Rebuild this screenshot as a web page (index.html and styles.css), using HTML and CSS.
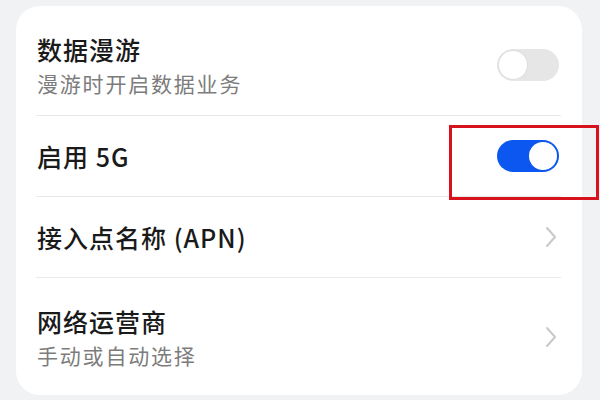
FILE: index.html
```html
<!DOCTYPE html>
<html lang="zh-CN">
<head>
<meta charset="utf-8">
<link rel="stylesheet" href="styles.css">
</head>
<body>
<div class="card">
  <div class="row row-first">
    <div class="texts">
      <div class="title">数据漫游</div>
      <div class="sub">漫游时开启数据业务</div>
    </div>
    <div class="switch"><span class="knob"></span></div>
  </div>
  <div class="row row-single">
    <div class="texts"><div class="title">启用 5G</div></div>
    <div class="switch on"><span class="knob"></span></div>
  </div>
  <div class="row row-single">
    <div class="texts"><div class="title">接入点名称 (APN)</div></div>
    <svg class="chev" width="12" height="22" viewBox="0 0 12 22"><path d="M2 2 L10 11 L2 20" fill="none" stroke="#c8c8c8" stroke-width="2" stroke-linecap="round" stroke-linejoin="round"/></svg>
  </div>
  <div class="row row-last">
    <div class="texts">
      <div class="title">网络运营商</div>
      <div class="sub">手动或自动选择</div>
    </div>
    <svg class="chev" width="12" height="22" viewBox="0 0 12 22"><path d="M2 2 L10 11 L2 20" fill="none" stroke="#c8c8c8" stroke-width="2" stroke-linecap="round" stroke-linejoin="round"/></svg>
  </div>
</div>
<div class="highlight"></div>
</body>
</html>
```
FILE: styles.css
```css
html, body {
  margin: 0;
  padding: 0;
}
body {
  width: 600px;
  height: 400px;
  background: #f1f2f4;
  font-family: "Noto Sans CJK SC", "Noto Sans", sans-serif;
  overflow: hidden;
  position: relative;
}
.card {
  margin: 6px 18px 0 16px;
  height: 389px;
  box-sizing: border-box;
  background: #ffffff;
  border-radius: 24px;
  padding: 0 21px 0 20px;
}
.row {
  display: flex;
  align-items: center;
  justify-content: space-between;
  border-bottom: 1px solid #e9e9e9;
  padding: 0 1px 0 1px;
}
.row-first {
  height: 110px;
  box-sizing: border-box;
  padding-top: 27px;
  padding-bottom: 19px;
}
.row-single {
  height: 81px;
  box-sizing: border-box;
}
.row-last {
  border-bottom: none;
  height: 117px;
  box-sizing: border-box;
  padding-top: 28px;
  padding-bottom: 27px;
}
.texts {
  display: flex;
  flex-direction: column;
  gap: 6px;
}
.title {
  font-size: 25px;
  line-height: 30px;
  letter-spacing: 1px;
  color: #1a1a1a;
  font-weight: 500;
}
.sub {
  font-size: 21px;
  line-height: 26px;
  letter-spacing: 1.8px;
  color: #7c7c7c;
}
.switch {
  width: 62px;
  height: 32px;
  border-radius: 16px;
  background: #e6e6e6;
  box-sizing: border-box;
  padding: 2px;
  display: flex;
  align-items: center;
  justify-content: flex-start;
  margin-right: 1px;
}
.switch .knob {
  width: 28px;
  height: 28px;
  border-radius: 50%;
  background: #ffffff;
  box-shadow: 0 0 0 1px #dedede;
}
.switch.on {
  background: #0b57f0;
  justify-content: flex-end;
}
.switch.on .knob {
  box-shadow: none;
}
.chev {
  margin-right: 3px;
}
.highlight {
  position: absolute;
  left: 449px;
  top: 125px;
  width: 150px;
  height: 75px;
  box-sizing: border-box;
  border: 3px solid #d8121c;
}
```
